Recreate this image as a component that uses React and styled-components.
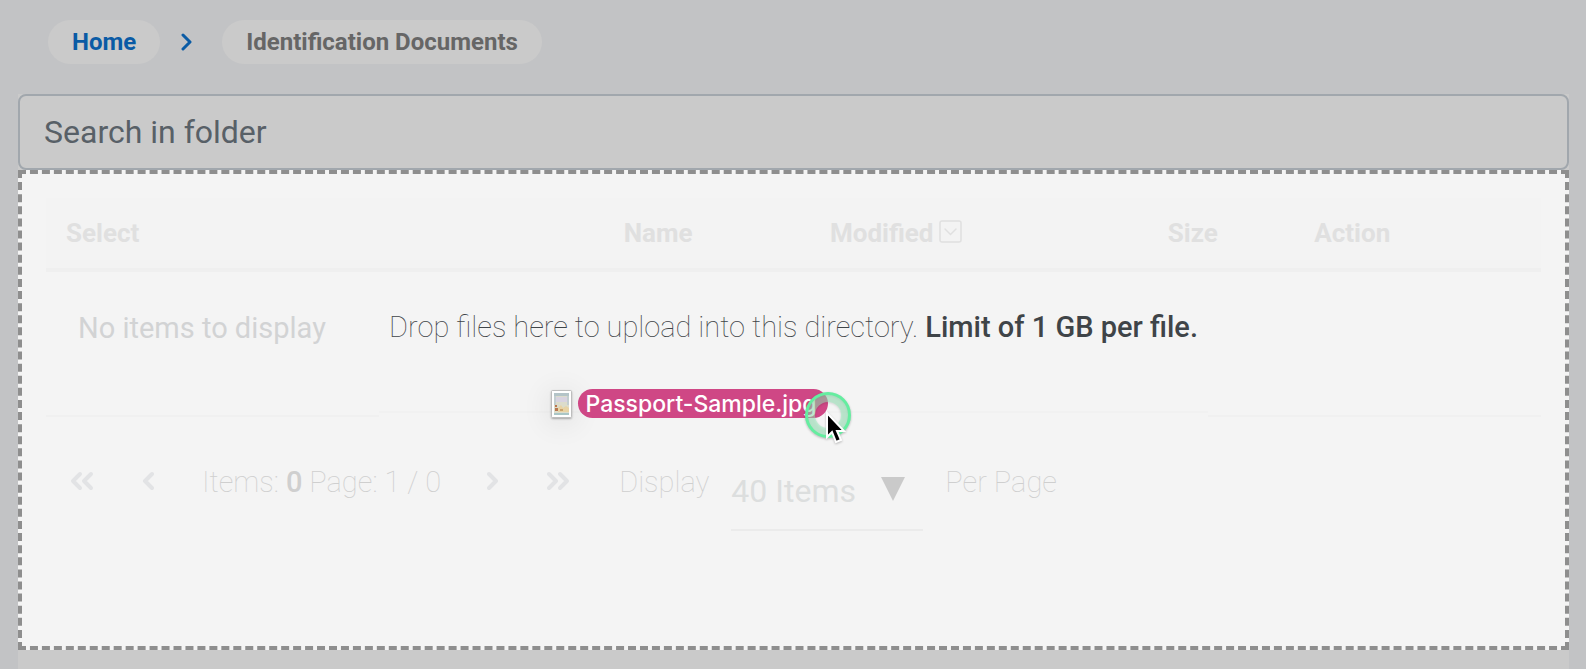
import React, { useState } from 'react'
import styled, { createGlobalStyle } from 'styled-components'

const columns = [
  { name: 'Select', width: '37.3%' },
  { name: 'Name', width: '13.8%' },
  { name: 'Modified', width: '22.6%', sorted: true },
  { name: 'Size', width: '9.8%' },
  { name: 'Action', width: '16.5%' },
]

function PageButton({ label, double, forward }) {
  const first = forward ? 'M2 4l7 7-7 7' : 'M10 4l-7 7 7 7'
  const second = forward ? 'M13 4l7 7-7 7' : 'M21 4l-7 7 7 7'
  const width = double ? 24 : 12
  return (
    <IconButton aria-label={label}>
      <svg width={width} height="22" viewBox={`0 0 ${width} 22`} fill="none" stroke="currentColor" strokeWidth="4" strokeLinecap="round" strokeLinejoin="round">
        <path d={first} />
        {double && <path d={second} />}
      </svg>
    </IconButton>
  )
}

function App() {
  const [search, setSearch] = useState('')
  const [perPage, setPerPage] = useState('40')

  return (
    <Page>
      <GlobalStyle />
      <Breadcrumbs aria-label="Breadcrumb">
        <CrumbLink href="#home">Home</CrumbLink>
        <Separator width="12" height="18" viewBox="0 0 12 18" fill="none" stroke="#0a5ba5" strokeWidth="3" strokeLinecap="round" strokeLinejoin="round">
          <path d="M3 2l7 7-7 7" />
        </Separator>
        <Crumb>Identification Documents</Crumb>
      </Breadcrumbs>

      <Panel>
        <Search
          aria-label="Search in folder"
          placeholder="Search in folder"
          value={search}
          onChange={(e) => setSearch(e.target.value)}
        />

        <DropZone>
          <Table>
            <thead>
              <tr>
                {columns.map((c) => (
                  <Th key={c.name} $width={c.width}>
                    {c.name}
                    {c.sorted && (
                      <SortIcon width="23" height="23" viewBox="0 0 23 23" fill="none" stroke="currentColor" strokeLinecap="round">
                        <rect x="1" y="1" width="21" height="21" rx="2" strokeWidth="1.5" />
                        <path d="M6 9l5.500 5.500L17 9" strokeWidth="1.5" />
                      </SortIcon>
                    )}
                  </Th>
                ))}
              </tr>
            </thead>
            <tbody>
              <tr>
                <Empty colSpan={columns.length}>No items to display</Empty>
              </tr>
            </tbody>
          </Table>

          <Pager>
            <PageButton label="First page" double />
            <PageButton label="Previous page" />
            <Counter>Items: <b>0</b> Page: 1 / 0</Counter>
            <PageButton label="Next page" forward />
            <PageButton label="Last page" double forward />
            <PerPage>
              <label htmlFor="per-page">Display</label>
              <SelectBox>
                <Select id="per-page" value={perPage} onChange={(e) => setPerPage(e.target.value)}>
                  <option value="40">40 Items</option>
                  <option value="80">80 Items</option>
                </Select>
                <svg width="24" height="24" viewBox="0 0 24 24" fill="#cacaca">
                  <path d="M0 0h24L12 24z" />
                </svg>
              </SelectBox>
              <span>Per Page</span>
            </PerPage>
          </Pager>

          <Overlay>
            <Message>
              Drop files here to upload into this directory. <strong>Limit of 1 GB per file.</strong>
            </Message>
            <DraggedFile>
              <Thumb width="21" height="28" viewBox="0 0 21 28">
                <rect x="0.500" y="0.500" width="20" height="27" fill="#fff" stroke="#bdbdbd" />
                <rect x="3" y="3" width="15" height="22" fill="#dcdccb" />
                <path d="M3 3h15v3H3z" fill="#b4c4c8" />
                <path d="M3 6h2v9H3zM16 6h2v9h-2z" fill="#c3ced0" />
                <path d="M5 7h11v5H5z" fill="#d8d3e0" />
                <path d="M7 18l3-3 2 3 3-2 3 2v4H7z" fill="#e8d3a4" />
                <path d="M4 15h2v2H4zM4 18h3v3H4z" fill="#b9764f" />
                <path d="M9 19h3v2H9z" fill="#c9a36d" />
                <path d="M3 23h15v2H3z" fill="#a9c6c6" />
              </Thumb>
              <FileName>Passport-Sample.jpg</FileName>
              <Pointer width="48" height="60" viewBox="0 0 48 60">
                <circle cx="24" cy="24" r="17" fill="none" stroke="#9af0bd" strokeWidth="8" opacity="0.5" />
                <circle cx="24" cy="24" r="21.500" fill="none" stroke="#65eda0" strokeWidth="3" />
                <path d="M23 22v24l5-5 4 10 5-2-4-9h7z" fill="#000" stroke="#fff" strokeWidth="2" />
              </Pointer>
            </DraggedFile>
          </Overlay>
        </DropZone>
      </Panel>
    </Page>
  )
}

const GlobalStyle = createGlobalStyle`
  * {
    box-sizing: border-box;
  }
  body {
    margin: 0;
    background: #c2c3c5;
    font-family: Roboto, 'Liberation Sans', sans-serif;
  }
`

const Page = styled.div`
  display: flex;
  flex-direction: column;
  min-height: 100vh;
  padding: 0 17px 0 18px;
`

const Breadcrumbs = styled.nav`
  display: flex;
  align-items: center;
  padding: 20px 30px 30px;
`

const Separator = styled.svg`
  margin: 0 30px 0 20px;
`

const Crumb = styled.span`
  padding: 0 24px;
  border-radius: 22px;
  background: #cacaca;
  color: #666;
  font-size: 24px;
  font-weight: 700;
  line-height: 44px;
`

const CrumbLink = styled(Crumb).attrs({ as: 'a' })`
  color: #0a5ba5;
  text-decoration: none;
`

const Panel = styled.main`
  flex: 1;
  background: #cacaca;
`

const Search = styled.input`
  display: block;
  width: 100%;
  height: 76px;
  padding: 0 24px;
  border: 2px solid #a1a7ad;
  border-radius: 8px;
  background: #cacaca;
  color: #586067;
  font: 400 32px Roboto, sans-serif;

  &::placeholder {
    color: #586067;
    opacity: 1;
  }
`

const DropZone = styled.section`
  position: relative;
  min-height: 480px;
  padding: 24px;
  border: 4px dashed #8e8e8e;
  background: #f4f4f4;
`

const Table = styled.table`
  width: 100%;
  table-layout: fixed;
  border-collapse: separate;
  border-spacing: 0;
`

const Th = styled.th`
  width: ${(p) => p.$width};
  height: 74px;
  padding: 0 20px;
  border-bottom: 4px solid #efefef;
  background: #f3f3f3;
  color: #e0e0e0;
  font-size: 26px;
  font-weight: 700;
  text-align: left;
  white-space: nowrap;
`

const SortIcon = styled.svg`
  margin-left: 6px;
  vertical-align: -1px;
`

const Empty = styled.td`
  height: 145px;
  padding: 32px;
  border-bottom: 2px solid #f0f0f0;
  color: #d2d3d4;
  font-size: 29px;
  line-height: 48px;
  vertical-align: top;
`

const Pager = styled.div`
  display: flex;
  align-items: flex-start;
  padding: 41px 24px 0;
  color: #cfcfcf;
  font-size: 29px;
  font-weight: 100;
  line-height: 48px;
`

const IconButton = styled.button`
  display: flex;
  align-items: center;
  height: 46px;
  margin-right: 48px;
  padding: 0;
  border: 0;
  background: none;
  color: #e2e3e5;
`

const Counter = styled.span`
  margin-right: 46px;

  b {
    font-weight: 500;
  }
`

const PerPage = styled.div`
  display: flex;
  gap: 22px;
`

const SelectBox = styled.div`
  display: flex;
  align-items: center;
  width: 192px;
  height: 73px;
  padding-bottom: 9px;
  border-bottom: 2px solid #ebebeb;
`

const Select = styled.select`
  appearance: none;
  width: 150px;
  padding: 4px 0 0;
  border: 0;
  background: none;
  color: #dcdede;
  font: 400 32px Roboto, sans-serif;
`

const Overlay = styled.div`
  position: absolute;
  top: 100px;
  left: 0;
  right: 0;
  display: flex;
  flex-direction: column;
  align-items: center;
  pointer-events: none;
`

const Message = styled.p`
  height: 143px;
  margin: 0;
  padding: 29px 10px;
  border-bottom: 4px solid #f4f4f4;
  box-shadow: inset 0 -2px #f1f1f1;
  background: #f4f4f4;
  color: #3f4448;
  font-size: 29px;
  font-weight: 100;
  line-height: 48px;

  strong {
    font-weight: 500;
  }
`

const DraggedFile = styled.div`
  position: absolute;
  top: 115px;
  left: calc(50% - 243px);
  display: flex;
  align-items: center;
  gap: 6px;
`

const Thumb = styled.svg`
  border-radius: 2px;
  box-shadow: 0 1px 2px rgba(0, 0, 0, 0.3), 0 4px 30px rgba(0, 0, 0, 0.12);
`

const FileName = styled.span`
  padding: 1px 11px 0 8px;
  border-radius: 15px;
  background: #cf4785;
  color: #fff;
  font-family: Inter, sans-serif;
  font-size: 23px;
  font-weight: 500;
  line-height: 28px;
`

const Pointer = styled.svg`
  position: absolute;
  top: 2px;
  right: -24px;
  filter: drop-shadow(0 1px 1px rgba(0, 0, 0, 0.25));
`

export default App
